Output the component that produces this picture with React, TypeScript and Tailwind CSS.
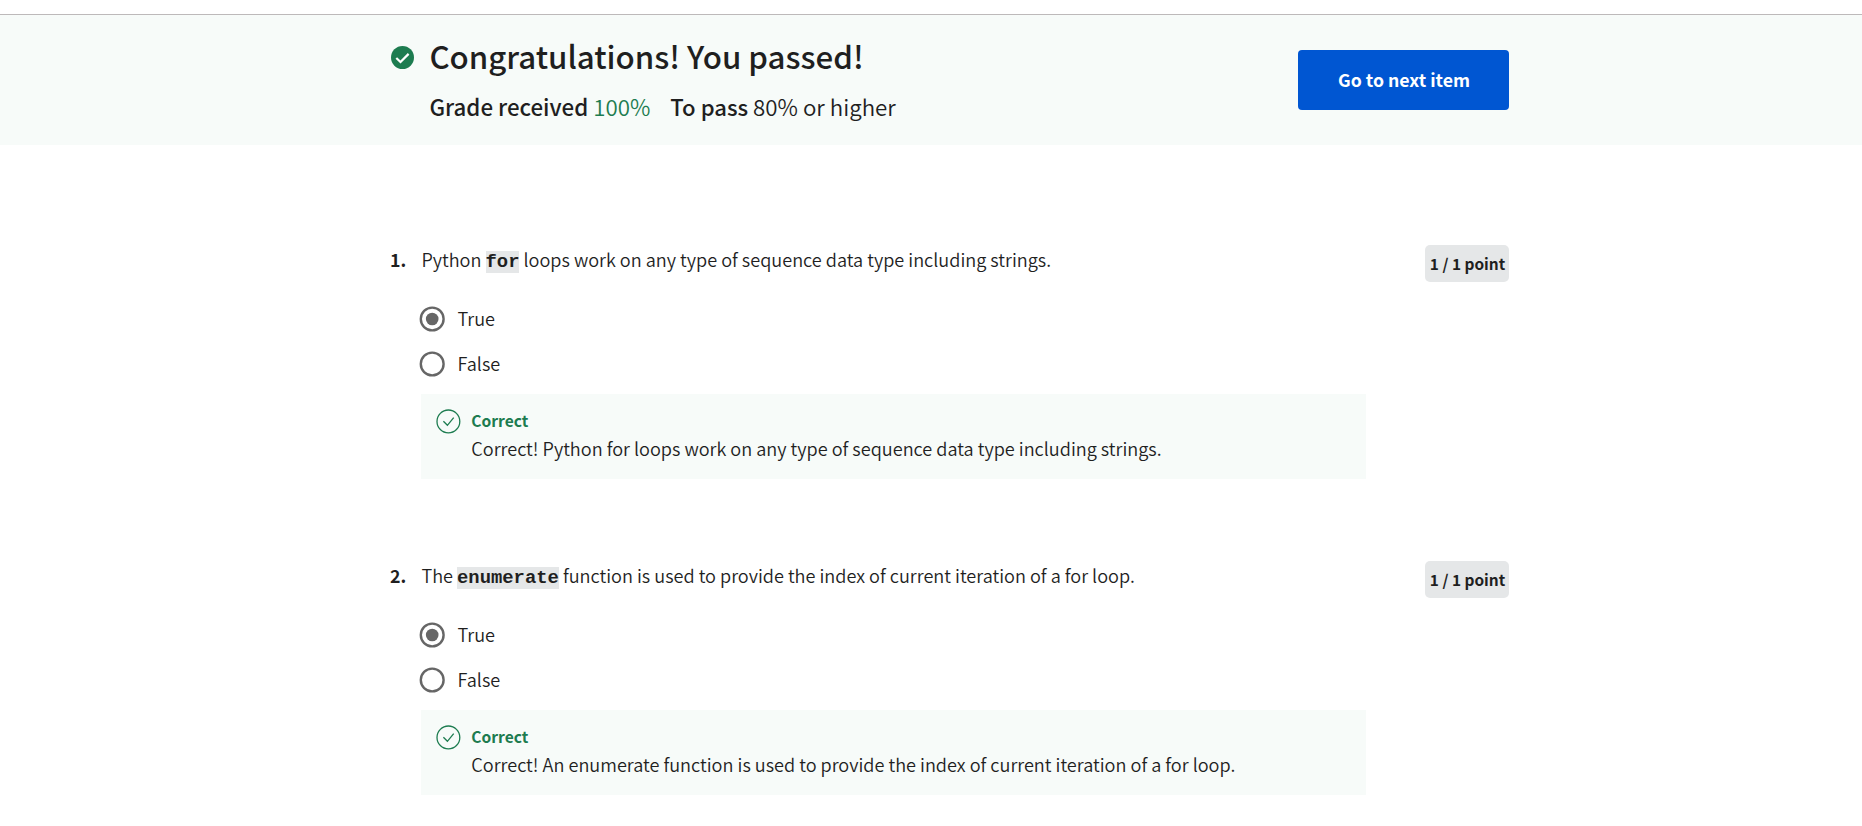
import type { ReactNode } from "react";

function PassedIcon() {
  return (
    <svg viewBox="0 0 23 23" className="mt-[10px] ml-px size-[23px] shrink-0" aria-hidden="true">
      <circle cx="11.5" cy="11.5" r="11.5" fill="#1d7c50" />
      <path d="M5.3 12 9.5 16 17.6 7.9" fill="none" stroke="#fff" strokeWidth="2.2" />
    </svg>
  );
}

function CorrectIcon() {
  return (
    <svg viewBox="0 0 25 25" className="mt-[3px] size-[25px] shrink-0" aria-hidden="true" fill="none" stroke="#1d7c50">
      <circle cx="12.4" cy="12.4" r="11.4" strokeWidth="1.3" />
      <path d="M7.4 12.2 11.4 16.3 17.7 8.6" strokeWidth="1.3" />
    </svg>
  );
}

function Radio({ label, checked }: { label: string; checked?: boolean }) {
  return (
    <label className="flex h-[45px] items-center">
      <svg viewBox="0 0 26 26" className="size-[26px]" aria-hidden="true">
        <circle cx="13.2" cy="13" r="11.4" fill="none" stroke="#666" strokeWidth="2.4" />
        {checked && <circle cx="13.2" cy="13" r="6.3" fill="#666" />}
      </svg>
      <span className="ml-[12.5px] pb-[2px] text-[18.11px] leading-7 font-[350]">{label}</span>
    </label>
  );
}

function Code({ children }: { children: ReactNode }) {
  return (
    <code className="bg-[#e5e7e8] font-['Liberation_Mono',monospace] text-[18.88px] font-bold">{children}</code>
  );
}

function Question({ index, prompt, feedback }: { index: number; prompt: ReactNode; feedback: string }) {
  return (
    <section className="flex items-start">
      <div className="mt-px w-[31px] shrink-0 text-[17.8px] leading-7 font-bold">{index}.</div>
      <div className="w-[945px] shrink-0">
        <p className="mt-px h-7 pl-[0.4px] text-[18.11px] leading-7 font-[350] whitespace-nowrap">{prompt}</p>
        <div className="mt-[23px] -ml-[2px]">
          <Radio label="True" checked />
          <Radio label="False" />
        </div>
        <div className="mt-2 flex h-[85px] w-[945px] bg-[#f7fbf9] pt-3 pl-[15px]">
          <CorrectIcon />
          <div className="ml-[10.3px] whitespace-nowrap">
            <div className="text-[15.6px] leading-7 font-bold text-[#1d7c50]">Correct</div>
            <p className="text-[18.11px] leading-7 font-[350]">{feedback}</p>
          </div>
        </div>
      </div>
      <div className="mt-px ml-auto flex h-[37px] w-[84px] items-center justify-center rounded-[5px] bg-[#e5e7e8] pl-px text-[15.45px] font-bold whitespace-nowrap">
        1 / 1 point
      </div>
    </section>
  );
}

export default function App() {
  return (
    <div className="h-[826px] overflow-hidden bg-white font-['Noto_Sans_CJK_SC',sans-serif] text-[#1f1f1f]">
      <header className="mt-[14px] h-[131px] border-t border-[#bdb9ba] bg-[#f7fbf9]">
        <div className="ml-[390px] flex h-full w-[1119px] items-center justify-between">
          <div className="flex h-full pt-[21px]">
            <PassedIcon />
            <div className="ml-[15.4px] whitespace-nowrap">
              <h1 className="text-[31.25px] leading-10 font-medium">Congratulations! You passed!</h1>
              <div className="mt-4 flex gap-5 text-[22.3px] leading-7 font-[350]">
                <span>
                  <strong className="text-[22.3px] font-medium">Grade received</strong>{" "}
                  <span className="text-[#1d7c50]">100%</span>
                </span>
                <span>
                  <strong className="text-[22.1px] font-medium">To pass</strong> 80% or higher
                </span>
              </div>
            </div>
          </div>
          <button className="h-[60px] w-[211px] rounded bg-[#0056d2] pb-[2px] pl-px text-[17.7px] font-bold text-white">
            Go to next item
          </button>
        </div>
      </header>
      <main className="ml-[390px] flex w-[1119px] flex-col gap-[81px] pt-[99px]">
        <Question
          index={1}
          prompt={<>Python <Code>for</Code> loops work on any type of sequence data type including strings.</>}
          feedback="Correct! Python for loops work on any type of sequence data type including strings."
        />
        <Question
          index={2}
          prompt={<>The <Code>enumerate</Code> function is used to provide the index of current iteration of a for loop.</>}
          feedback="Correct! An enumerate function is used to provide the index of current iteration of a for loop."
        />
      </main>
    </div>
  );
}
